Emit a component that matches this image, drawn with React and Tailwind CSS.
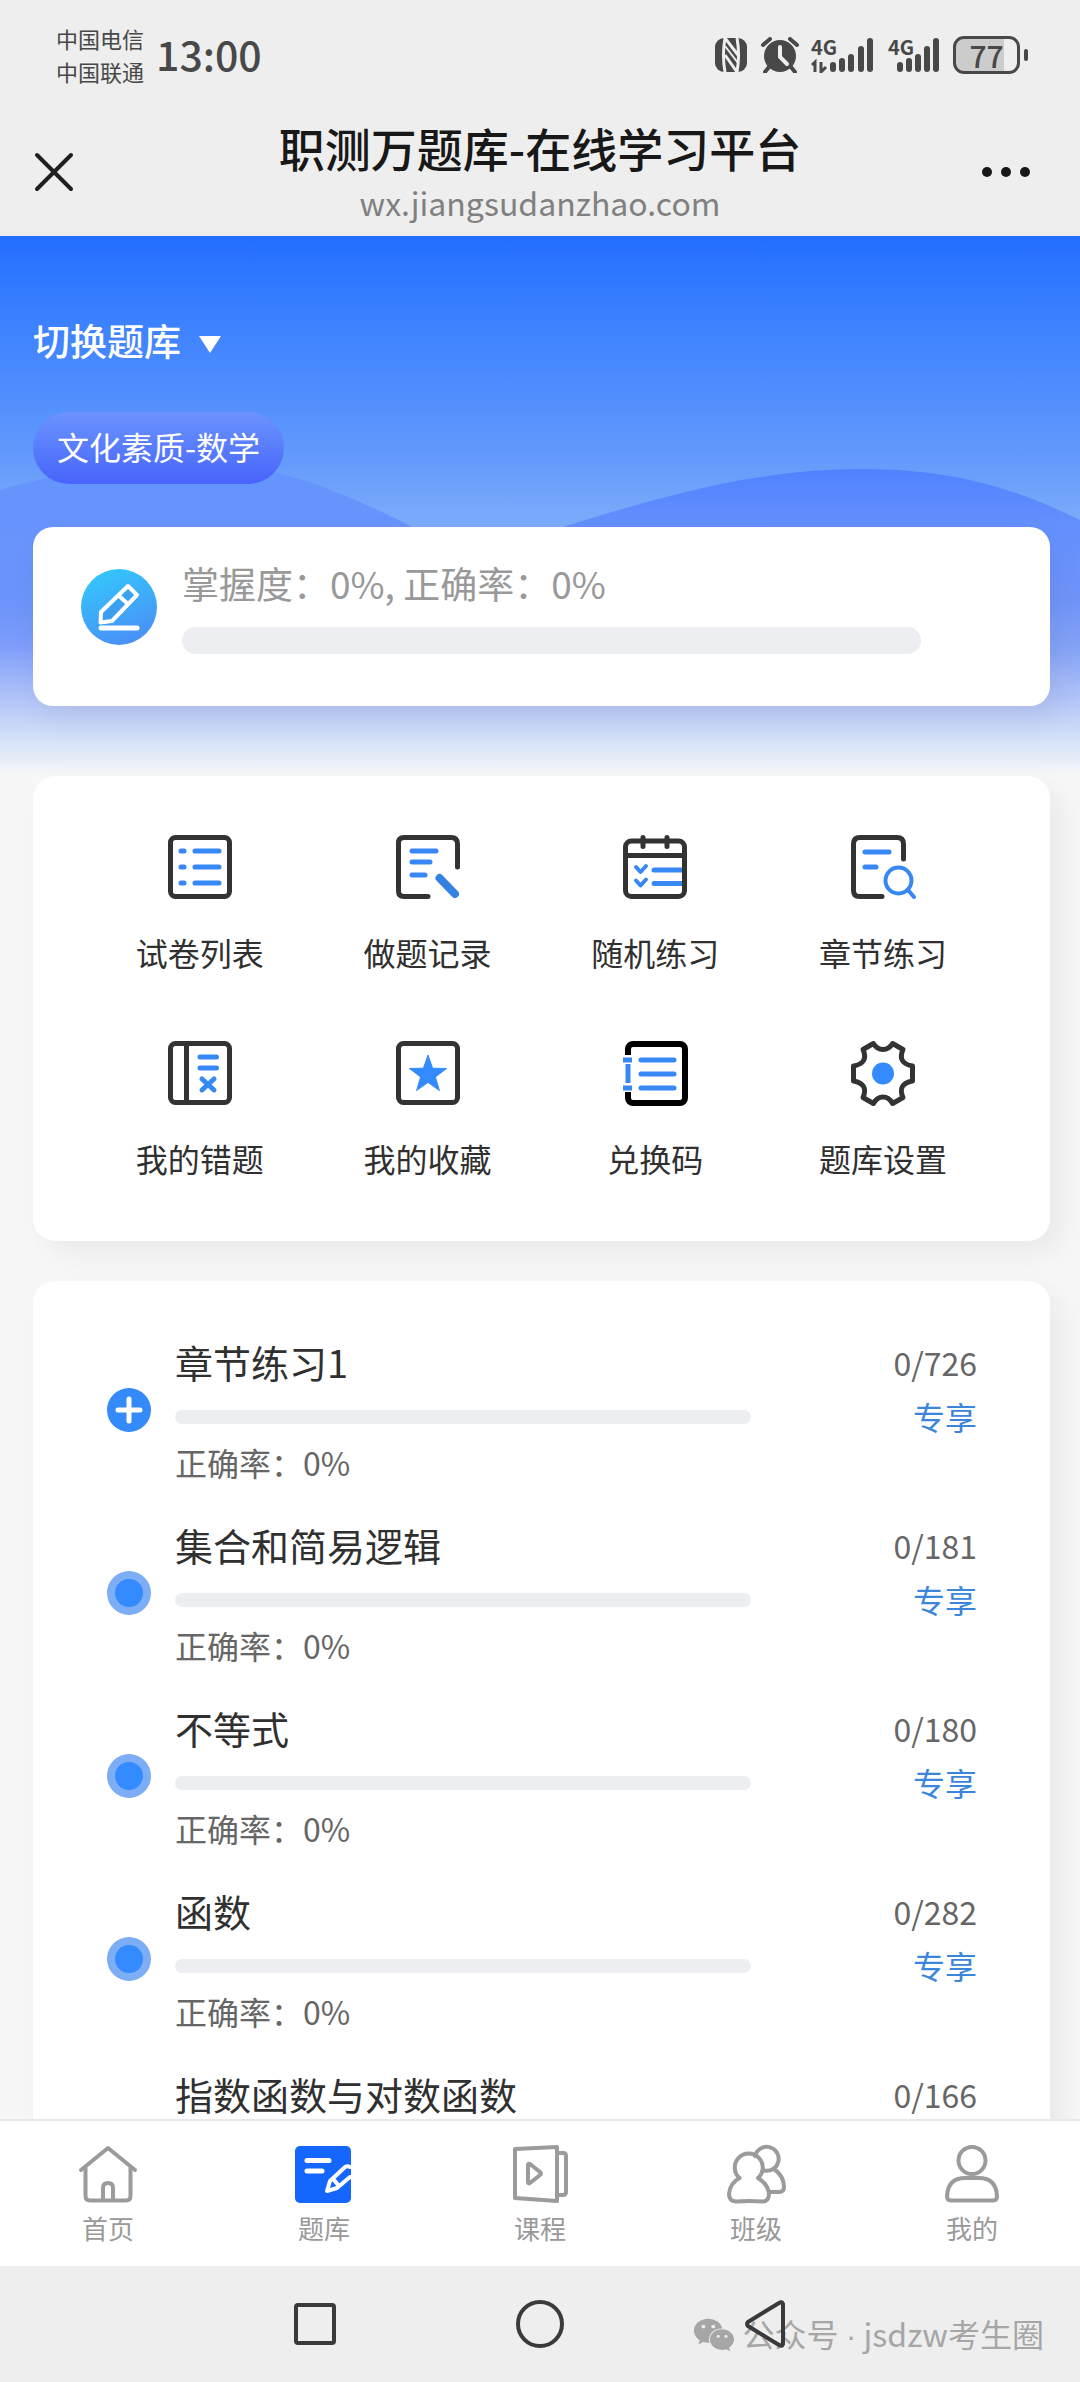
import { useState } from 'react'
import { FaWeixin } from 'react-icons/fa'

const DARK = '#333333'
const BLUE = '#3787f4'
const GREY = '#9b9b9b'

const Stroke = ({ color, width = 5, children }) => (
  <g fill="none" stroke={color} strokeWidth={width} strokeLinecap="round" strokeLinejoin="round">
    {children}
  </g>
)

const menuIcons = {
  papers: (
    <>
      <Stroke color={DARK}><rect x="2.5" y="2.5" width="59" height="59" rx="5" /></Stroke>
      <Stroke color={BLUE}><path d="M13 16h3M27 16h24M13 32h3M27 32h24M13 48h3M27 48h24" /></Stroke>
    </>
  ),
  records: (
    <>
      <Stroke color={DARK}><path d="M61.5 32V9q0-6.5-6.5-6.5H8q-5.5 0-5.5 5.5v48q0 5.5 5.5 5.5h24" /></Stroke>
      <Stroke color={BLUE}><path d="M16 16h24M16 27h18M16 40h13" /></Stroke>
      <Stroke color="#3381e0" width={8}><path d="M43.5 43l15.5 16" /></Stroke>
    </>
  ),
  random: (
    <>
      <Stroke color={BLUE}><path d="M31 35h29M31 48.5h29" /></Stroke>
      <Stroke color={BLUE} width={4}><path d="M13 32l4.5 5 5.5-6M13 45.5l4.5 5 5.5-6" /></Stroke>
      <Stroke color={DARK}>
        <rect x="2.5" y="6" width="59" height="55.5" rx="6" />
        <path d="M3 20.5h58M20 2.5v9M44 2.5v9" />
      </Stroke>
    </>
  ),
  chapters: (
    <>
      <Stroke color={DARK}><path d="M52.5 24V9q0-6.5-6.5-6.5H9q-6.5 0-6.5 6.5v46.5q0 6 6 6H31" /></Stroke>
      <Stroke color={BLUE}><path d="M14 17h24M14 32h11" /></Stroke>
      <Stroke color={BLUE} width={4}>
        <circle cx="47.5" cy="45.5" r="13" />
        <path d="M57 55l6 7" />
      </Stroke>
    </>
  ),
  mistakes: (
    <>
      <Stroke color={DARK}>
        <rect x="2.5" y="2.5" width="59" height="59" rx="5" />
        <path d="M18.5 3v58" />
      </Stroke>
      <Stroke color={BLUE}><path d="M32 16h16.5M32 27h16.5M34 38l12 11M46 38L34 49" /></Stroke>
    </>
  ),
  favorites: (
    <>
      <Stroke color={DARK}><rect x="2.5" y="2.5" width="59" height="59" rx="5" /></Stroke>
      <path
        d="M32 14l4.6 13.2 14 .3-11.2 8.5 4 13.5L32 41.4 20.6 49.5l4-13.5L13.4 27.5l14-.3z"
        fill="#338bff" stroke="#338bff" strokeLinejoin="round"
      />
    </>
  ),
  redeem: (
    <>
      <Stroke color="#000000" width={6}>
        <rect x="5" y="3" width="57" height="59" rx="5" />
      </Stroke>
      <path d="M0 14h12v37H0z" fill="#ffffff" />
      <g stroke={BLUE} strokeWidth="5" fill="none">
        <path d="M0 19h9M0 47h9M5 23v19" />
        <path d="M18 19h33M18 33h33M18 47h33" strokeLinecap="round" />
      </g>
    </>
  ),
  settings: (
    <>
      <Stroke color={DARK}>
        <path d="M22.4 2.5Q26 8.5 32 8.5Q38 8.5 41.6 2.5L52 8.5Q46 22 61.5 25V40Q46 43 52 56.5L41.6 62.500Q38 56 32 56Q26 56 22.4 62.500L12 56.5Q18 43 2.5 40V25Q18 22 12 8.5Z" />
      </Stroke>
      <circle cx="32" cy="32.5" r="11" fill="#338bff" />
    </>
  ),
}

const tabIcons = {
  home: (
    <Stroke color={GREY} width={4}>
      <path d="M2 25L29 3l27 22M6.5 22v29q0 4.5 4.5 4.5h36q4.500 0 4.500-4.500V22" />
      <path d="M24 55V43q0-5 5-5t5 5v12" />
    </Stroke>
  ),
  bank: (
    <>
      <rect x="0" y="1" width="56" height="57" rx="5" fill="#1566ff" />
      <Stroke color="#ffffff" width={5}><path d="M12 15.5h22M12 26h15" /></Stroke>
      <Stroke color="#ffffff" width={4}>
        <path d="M55 22q-3-2-6 1L35 36l-3 10 10-3 13-11M39 35l5 6" />
      </Stroke>
    </>
  ),
  course: (
    <Stroke color={GREY} width={4}>
      <path d="M4 4l42-2v54L4 53zM46 8h6q3 0 3 3v36q0 3-3 3h-6" />
      <path d="M17 20q0-2 2-1l10 8q2 2 0 3l-10 8q-2 1-2-1z" />
    </Stroke>
  ),
  group: (
    <Stroke color={GREY} width={4}>
      <path d="M12.5 33A14 14 0 1 1 31 33Q42 40 42 50Q41 57 35 56.5Q22 55.5 9 56.5Q2 56 2 49Q3 38 12.5 33Z" />
      <path d="M28 11A12 12 0 1 1 37 25.500M47 24Q57 31 57 42Q57 47 52 47H43" />
    </Stroke>
  ),
  mine: (
    <Stroke color={GREY} width={4}>
      <circle cx="29" cy="15.5" r="13.5" />
      <path d="M4 51Q5 33 22 33H36Q53 33 54 51Q54 55.5 50 55.5H8Q4 55.5 4 51Z" />
    </Stroke>
  ),
}

const menus = [
  { key: 'papers', label: '试卷列表' },
  { key: 'records', label: '做题记录' },
  { key: 'random', label: '随机练习' },
  { key: 'chapters', label: '章节练习' },
  { key: 'mistakes', label: '我的错题' },
  { key: 'favorites', label: '我的收藏' },
  { key: 'redeem', label: '兑换码' },
  { key: 'settings', label: '题库设置' },
]

const chapters = [
  { title: '章节练习1', done: 0, total: 726, rate: 0, expandable: true },
  { title: '集合和简易逻辑', done: 0, total: 181, rate: 0 },
  { title: '不等式', done: 0, total: 180, rate: 0 },
  { title: '函数', done: 0, total: 282, rate: 0 },
  { title: '指数函数与对数函数', done: 0, total: 166, rate: 0 },
]

const tabs = [
  { key: 'home', label: '首页' },
  { key: 'bank', label: '题库' },
  { key: 'course', label: '课程' },
  { key: 'group', label: '班级' },
  { key: 'mine', label: '我的' },
]

function Signal({ arrows }) {
  return (
    <div className="relative h-9 w-[62px]">
      <span className="absolute left-0 top-0 text-[20px] leading-5 font-bold">4G</span>
      <svg viewBox="0 0 62 36" className="h-9 w-[62px]" aria-hidden="true">
        {arrows && <path d="M1 28l3-3v10M10 25v10l5-5" fill="none" stroke="#484848" strokeWidth="3" />}
        <g stroke="#484848" strokeWidth="6" strokeLinecap="round">
          <path d={arrows ? 'M22 28v4M31 24v8' : 'M12 28v4M21 24v8'} />
          <path d={arrows ? 'M40 20v12M50 12v20M59 4v28' : 'M30 20v12M39 12v20M48 4v28'} />
        </g>
      </svg>
    </div>
  )
}

function StatusBar() {
  return (
    <div className="flex items-center justify-between pt-[22px] pr-[52px] pl-14 text-[#484848]">
      <div className="flex items-center gap-3">
        <div className="text-[22px] leading-[33px]">
          <p>中国电信</p>
          <p>中国联通</p>
        </div>
        <time className="pb-1 text-[41px] leading-[48px] font-medium">13:00</time>
      </div>
      <div className="flex items-center">
        <svg viewBox="0 0 34 36" className="mr-[13px] h-9 w-[34px]" aria-label="NFC">
          <rect x="1" y="1" width="32" height="34" rx="9" fill="#484848" />
          <g fill="none" stroke="#eeeeee" strokeWidth="3">
            <path d="M11 35C9 24 9 12 11 1l13 17" />
            <path d="M23 1c2 11 2 23 0 34L11 18" />
          </g>
          <path d="M11 9l13 17" stroke="#eeeeee" strokeWidth="2" />
        </svg>
        <svg viewBox="0 0 38 36" className="mr-3 h-9 w-[38px]" aria-label="闹钟">
          <circle cx="19" cy="19" r="16" fill="#484848" />
          <path d="M2 8l7-6M36 8l-7-6M8 30l-4 5M30 30l4 5" stroke="#484848" strokeWidth="4" strokeLinecap="round" />
          <path d="M19 10v10l7 7" fill="none" stroke="#eeeeee" strokeWidth="4" strokeLinecap="round" />
        </svg>
        <div className="mr-[15px]"><Signal arrows /></div>
        <div className="mr-[3px]"><Signal /></div>
        <div className="flex h-[38px] w-[67px] items-center rounded-[11px] border-[3px] border-[#484848] bg-[linear-gradient(90deg,#cccccc_78%,#eeeeee_78%)]">
          <span className="w-full text-center text-[30px] leading-8 font-medium">77</span>
        </div>
        <i className="ml-1 h-3 w-1 rounded-full bg-[#484848]" />
      </div>
    </div>
  )
}

function TitleBar() {
  return (
    <div className="flex items-center justify-between pt-5 pr-[50px] pl-[34px]">
      <button aria-label="关闭" className="w-16">
        <svg viewBox="0 0 40 40" className="size-10">
          <path d="M3 3l34 34M37 3L3 37" stroke="#1f1f1f" strokeWidth="4" strokeLinecap="round" />
        </svg>
      </button>
      <div className="py-[9px] text-center">
        <h1 className="text-[46px] leading-[60px] font-medium text-[#181818]">职测万题库-在线学习平台</h1>
        <p className="text-[32px] leading-[50px] text-[#808080]">wx.jiangsudanzhao.com</p>
      </div>
      <button aria-label="更多" className="flex w-12 justify-between">
        <i className="size-[10px] rounded-full bg-[#181818]" />
        <i className="size-[10px] rounded-full bg-[#181818]" />
        <i className="size-[10px] rounded-full bg-[#181818]" />
      </button>
    </div>
  )
}

function Waves() {
  return (
    <svg viewBox="0 0 1080 540" preserveAspectRatio="none" className="absolute inset-0 size-full" aria-hidden="true">
      <defs>
        <linearGradient id="waveLeft" gradientUnits="userSpaceOnUse" x1="0" y1="225" x2="0" y2="540">
          <stop offset="0" stopColor="#6394fd" />
          <stop offset="0.45" stopColor="#6c94fb" />
          <stop offset="0.58" stopColor="#7b9cfa" />
          <stop offset="0.75" stopColor="#b0c3f8" />
          <stop offset="0.9" stopColor="#d8e4f7" />
          <stop offset="1" stopColor="#f7f7f8" />
        </linearGradient>
        <linearGradient id="waveRight" gradientUnits="userSpaceOnUse" x1="0" y1="225" x2="0" y2="540">
          <stop offset="0" stopColor="#4e80ff" />
          <stop offset="0.2" stopColor="#6390fd" />
          <stop offset="0.45" stopColor="#7094f9" />
          <stop offset="0.6" stopColor="#86a4f6" />
          <stop offset="0.75" stopColor="#b0c3f8" />
          <stop offset="0.9" stopColor="#d8e4f7" />
          <stop offset="1" stopColor="#f7f7f8" />
        </linearGradient>
      </defs>
      <path d="M0 254C130 216 240 220 320 250C360 265 390 279 414 292L540 340V540H0Z" fill="url(#waveLeft)" />
      <path d="M480 318C510 310 540 300 566 290C650 264 750 233 860 233C950 233 1010 250 1080 284V540H480Z" fill="url(#waveRight)" />
    </svg>
  )
}

function ProgressBar({ value, label, className }) {
  return (
    <div role="progressbar" aria-label={label} aria-valuenow={value} className={`overflow-hidden rounded-full bg-[#eceef1] ${className}`}>
      <div className="h-full bg-[#338bff]" style={{ width: `${value}%` }} />
    </div>
  )
}

function Hero() {
  return (
    <section className="relative bg-[linear-gradient(180deg,#226eff_0%,#367dff_12%,#4a8aff_25%,#6198fb_40%,#7aabfb_53%,#b4c5f7_85%,#f7f7f8_100%)] pt-[76px] pb-[70px]">
      <Waves />
      <div className="relative mr-[30px] ml-[33px]">
        <button className="flex items-center gap-[18px] text-[37px] leading-[56px] font-medium text-white">
          切换题库
          <svg viewBox="0 0 22 17" className="mt-2 h-[17px] w-[22px]" aria-hidden="true">
            <path d="M0 0h22L11 17z" fill="#ffffff" />
          </svg>
        </button>
        <div className="mt-11 flex">
          <span className="rounded-full bg-gradient-to-b from-[#6c93fd] to-[#4863fb] px-6 pb-1 text-[32px] leading-[68px] text-white">
            文化素质-数学
          </span>
        </div>
        <div className="mt-[43px] flex gap-[25px] rounded-[20px] bg-white pt-9 pr-[129px] pb-[52px] pl-12 shadow-[6px_12px_30px_rgba(0,0,0,0.06)]">
          <svg viewBox="0 0 76 76" className="mt-[6px] size-[76px] shrink-0" aria-hidden="true">
            <defs>
              <linearGradient id="pencil" x1="0.2" y1="0" x2="0.6" y2="1">
                <stop offset="0" stopColor="#33c8fc" />
                <stop offset="1" stopColor="#4990f6" />
              </linearGradient>
            </defs>
            <circle cx="38" cy="38" r="38" fill="url(#pencil)" />
            <path d="M19 44L47 17l10 9-25 26-13 2.5z" fill="#2f7fd0" opacity="0.25" transform="translate(1 2)" />
            <Stroke color="#ffffff" width={4}>
              <path d="M20 43L47 17l9 9-25 26-11.500 1.500zM38 27l9 8" />
            </Stroke>
            <path d="M20 59h36" stroke="#ffffff" strokeWidth="5" strokeLinecap="round" />
          </svg>
          <div className="flex-1">
            <p className="text-[37px] leading-10 text-[#999999]">掌握度：0%, 正确率：0%</p>
            <ProgressBar value={0} label="掌握度" className="mt-6 h-[27px]" />
          </div>
        </div>
      </div>
    </section>
  )
}

function Menu() {
  return (
    <section className="mr-[30px] ml-[33px] grid grid-cols-4 gap-y-[69px] rounded-[22px] bg-white px-[53px] pt-[59px] pb-[63px] shadow-[12px_12px_30px_rgba(0,0,0,0.06)]">
      {
        menus.map((item) => (
          <button key={item.key} className="flex flex-col items-center gap-[33px] text-[32px] leading-10 text-[#303030]">
            <svg viewBox="0 0 64 64" className="size-16 overflow-visible" aria-hidden="true">{menuIcons[item.key]}</svg>
            {item.label}
          </button>
        ))
      }
    </section>
  )
}

function ChapterItem({ chapter }) {
  return (
    <li className="flex items-center gap-6">
      <button aria-label={chapter.expandable ? '展开' : '练习'} className="size-[44px] shrink-0">
        <svg viewBox="0 0 44 44" className="size-[44px]">
          {chapter.expandable ? (
            <>
              <circle cx="22" cy="22" r="22" fill="#338af8" />
              <path d="M22 11v22M11 22h22" stroke="#ffffff" strokeWidth="5" strokeLinecap="round" />
            </>
          ) : (
            <>
              <circle cx="22" cy="22" r="22" fill="#7cadf5" />
              <circle cx="22" cy="22" r="14" fill="#338bff" />
            </>
          )}
        </svg>
      </button>
      <div className="flex-1">
        <h2 className="text-[38px] leading-[48px] whitespace-nowrap text-[#303030]">{chapter.title}</h2>
        <ProgressBar value={chapter.done} label={chapter.title} className="mt-6 h-[14px]" />
        <p className="mt-[18px] text-[32px] leading-10 text-[#666666]">{`正确率：${chapter.rate}%`}</p>
      </div>
      <div className="w-[202px] self-start text-right text-[32px] text-[#666666]">
        <p className="leading-[48px]">{`${chapter.done}/${chapter.total}`}</p>
        <p className="mt-[10px] leading-10 text-[#3b85db]">专享</p>
      </div>
    </li>
  )
}

function TabBar() {
  const [active, setActive] = useState('bank')
  return (
    <nav className="grid grid-cols-5 border-t-2 border-[#e9e9e9] bg-white pt-6 pb-5">
      {
        tabs.map((tab) => (
          <a
            key={tab.key}
            href={`#${tab.key}`}
            aria-current={active === tab.key ? 'page' : undefined}
            onClick={() => setActive(tab.key)}
            className="flex flex-col items-center gap-[7px] text-[26px] leading-9 text-[#999999]"
          >
            <svg viewBox="0 0 58 58" className="size-[58px] overflow-visible" aria-hidden="true">{tabIcons[tab.key]}</svg>
            {tab.label}
          </a>
        ))
      }
    </nav>
  )
}

function SystemNav() {
  return (
    <div className="relative flex h-[116px] items-center justify-center gap-[177px] bg-[#eeeeee]">
      <div className="absolute right-9 bottom-[23px] flex items-center gap-2 text-[32px] leading-[46px] text-[#a6a6a6]">
        <FaWeixin className="size-[42px]" />
        <p>公众号 <span className="font-['Liberation_Sans']">·</span> jsdzw考生圈</p>
      </div>
      <button aria-label="最近任务" className="relative size-12">
        <svg viewBox="0 0 48 48" className="size-12">
          <rect x="5" y="5" width="38" height="38" rx="2" fill="none" stroke="#3a3a3a" strokeWidth="4" />
        </svg>
      </button>
      <button aria-label="主屏幕" className="relative size-12">
        <svg viewBox="0 0 48 48" className="size-12">
          <circle cx="24" cy="24" r="22" fill="none" stroke="#3a3a3a" strokeWidth="4" />
        </svg>
      </button>
      <button aria-label="返回" className="relative size-12">
        <svg viewBox="0 0 48 48" className="size-12">
          <path d="M42 4v40q-1 3-4 1L7 26q-2-2 0-4L38 3q3-2 4 1z" fill="none" stroke="#3a3a3a" strokeWidth="4" strokeLinejoin="round" />
        </svg>
      </button>
    </div>
  )
}

export default function App() {
  return (
    <div className="flex h-screen flex-col bg-[#f7f7f7] font-['Noto_Sans_CJK_SC','Noto_Sans',sans-serif]">
      <header className="bg-[#eeeeee]">
        <StatusBar />
        <TitleBar />
      </header>
      <main className="min-h-0 flex-1 overflow-y-auto [scrollbar-width:none]">
        <Hero />
        <div className="relative">
          <Menu />
          <ul className="mt-10 mr-[30px] ml-[33px] flex flex-col gap-[39px] rounded-[22px] bg-white pt-[57px] pr-[73px] pb-[60px] pl-[74px] shadow-[12px_12px_30px_rgba(0,0,0,0.06)]">
            {chapters.map((chapter) => <ChapterItem key={chapter.title} chapter={chapter} />)}
          </ul>
        </div>
      </main>
      <TabBar />
      <SystemNav />
    </div>
  )
}
